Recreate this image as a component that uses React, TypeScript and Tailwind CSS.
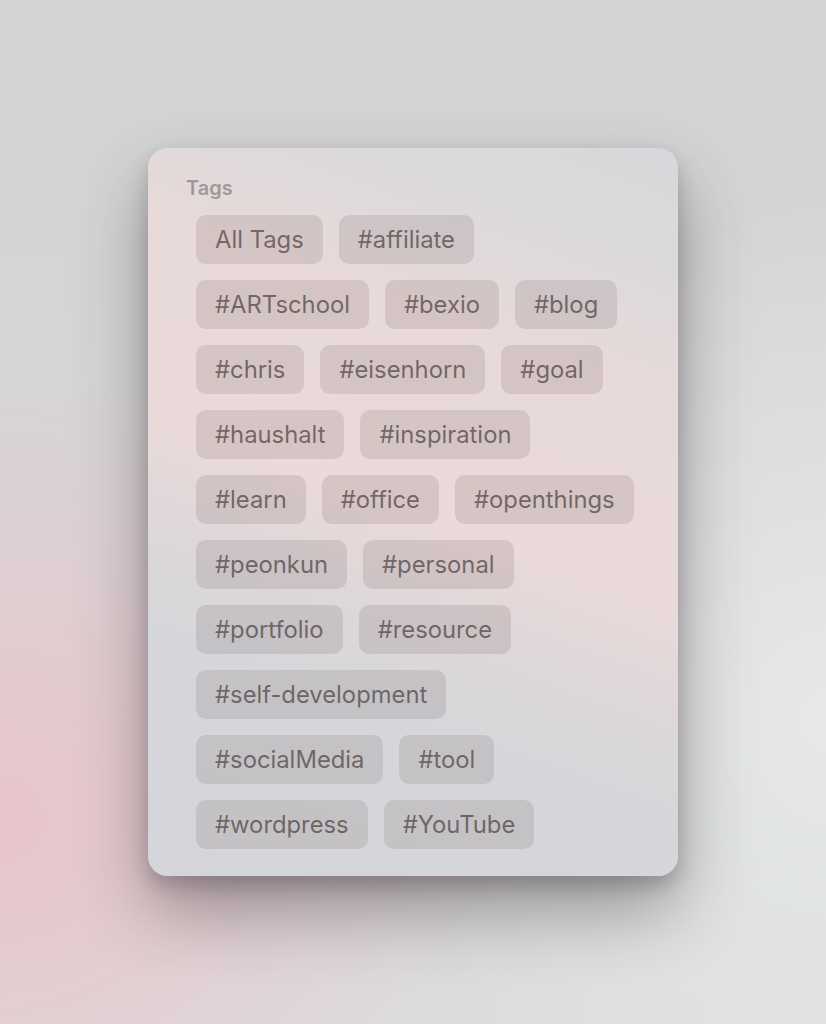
import React from 'react';

const rows: string[][] = [
  ['All Tags', '#affiliate'],
  ['#ARTschool', '#bexio', '#blog'],
  ['#chris', '#eisenhorn', '#goal'],
  ['#haushalt', '#inspiration'],
  ['#learn', '#office', '#openthings'],
  ['#peonkun', '#personal'],
  ['#portfolio', '#resource'],
  ['#self-development'],
  ['#socialMedia', '#tool'],
  ['#wordpress', '#YouTube'],
];

const Tag: React.FC<{ label: string }> = ({ label }) => (
  <button className="h-[49px] px-[19px] rounded-[10px] bg-[rgba(70,50,50,0.12)] text-[23.8px] text-[rgba(70,60,62,0.7)] leading-none whitespace-nowrap">
    {label}
  </button>
);

export default function App() {
  return (
    <div
      className="min-h-screen w-full flex items-center justify-center bg-[radial-gradient(ellipse_60%_45%_at_0%_80%,#e8c5ca_0%,rgba(232,197,202,0)_100%),radial-gradient(ellipse_50%_50%_at_100%_70%,#e6e9e8_0%,rgba(230,233,232,0)_100%),linear-gradient(180deg,#d3d4d6_0%,#d6d6d8_50%,#dcdddf_100%)]"
      style={{ fontFamily: 'Inter, "Noto Sans", sans-serif' }}
    >
      <div className="w-[530px] h-[728px] rounded-[20px] pt-[30px] pl-[38px] pr-[30px] pb-[26px] flex flex-col bg-[linear-gradient(200deg,#d7d8db_0%,#dcd9dc_14%,#e7dad9_27%,#eadad9_50%,#ddd7d9_62%,#d6d7da_72%,#d4d5d8_100%)] shadow-[0_34px_70px_rgba(50,40,45,0.42),0_10px_18px_rgba(50,40,45,0.22)]">
        <h3 className="text-[20px] font-semibold text-[#a09898] leading-none mb-[17px]">Tags</h3>
        <div className="flex flex-col gap-4 pl-[10px]">
          {rows.map((row, i) => (
            <div key={i} className="flex gap-4">
              {row.map(t => (
                <Tag key={t} label={t} />
              ))}
            </div>
          ))}
        </div>
      </div>
    </div>
  );
}
